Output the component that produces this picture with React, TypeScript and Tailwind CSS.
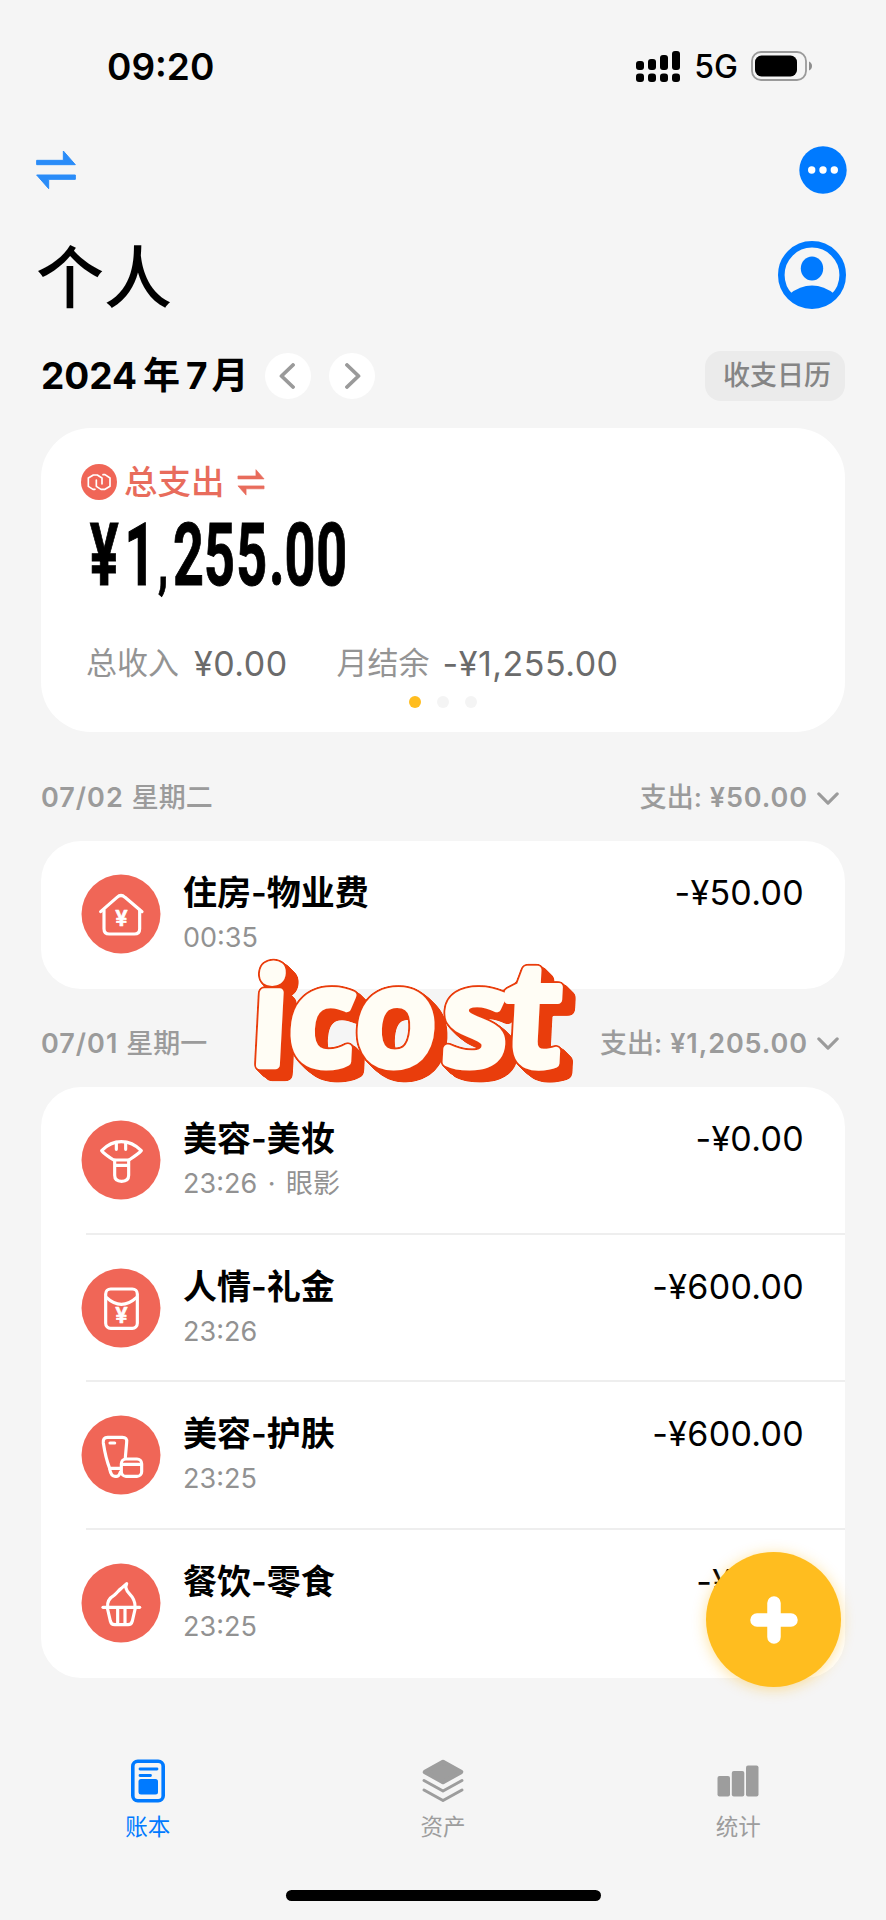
import type { ReactNode } from 'react';

type IconProps = { className?: string };

/* Category icons share a 240 x 240 box with a full-bleed red disc */
function CategoryIcon({ children }: { children: ReactNode }) {
    return (
        <svg
            viewBox="0 0 240 240"
            className="w-20 h-20 shrink-0"
            fill="none"
            stroke="#fff"
            strokeWidth="9.5"
            strokeLinecap="round"
            strokeLinejoin="round"
        >
            <circle cx="120" cy="120" r="118.5" fill="#f06657" stroke="none" />
            {children}
        </svg>
    );
}

function Yen({ y }: { y: number }) {
    return (
        <text x="121" y={y} textAnchor="middle" fill="#fff" stroke="#fff" strokeWidth="2" className="font-['Inter'] font-semibold text-[66px]">
            ¥
        </text>
    );
}

function HouseIcon() {
    return (
        <CategoryIcon>
            <path d="M59 113 L108 70 Q120 59 132 70 L183 113" />
            <path d="M69 108 V164 Q69 180 85 180 H160 Q176 180 176 164 V108" />
            <Yen y={155} />
        </CategoryIcon>
    );
}

function BrushIcon() {
    return (
        <CategoryIcon>
            <path d="M98 120 Q70 102 62 92 Q88 65 121 65 Q154 65 181 92 Q172 102 144 120 Z" />
            <path d="M106 67 V88 M134 67 V88" />
            <path d="M101 120 V166 Q101 184 122 184 Q143 184 143 166 V120 M101 136 H143" />
        </CategoryIcon>
    );
}

function PacketIcon() {
    return (
        <CategoryIcon>
            <rect x="74" y="63" width="95" height="118" rx="15" />
            <path d="M76 88 Q121 130 167 88" />
            <Yen y={166} />
        </CategoryIcon>
    );
}

function SkinCareIcon() {
    return (
        <CategoryIcon>
            <path d="M118 160 H86 Q74 130 67 84 Q65 67 80 67 H124 Q139 67 137 82 L133 128" />
            <path d="M86 162 Q90 184 102 184 H108 Q114 184 118 172" />
            <path d="M87 84 H101" />
            <rect x="121" y="132" width="61" height="52" rx="14" />
            <path d="M123 148 H180" />
        </CategoryIcon>
    );
}

function CupcakeIcon() {
    return (
        <CategoryIcon>
            <path d="M66 133 H176" />
            <path d="M79 135 L88 174 Q91 185 101 185 H141 Q151 185 154 174 L163 135" />
            <path d="M110 135 V184 M132 135 V184" />
            <path d="M80 131 C78 112 87 104 99 97 C108 91 111 83 121 76 Q128 70 137 62 Q132 71 137 80 C139 93 163 98 162 131" />
        </CategoryIcon>
    );
}

function SwapIcon({ className }: IconProps) {
    return (
        <svg viewBox="0 0 120 120" className={className} fill="currentColor" stroke="currentColor" strokeWidth="3" strokeLinejoin="round">
            <path d="M2 31 H82 V3 L118 44 H2 Z" />
            <path d="M118 88 H38 V116 L2 75 H118 Z" />
        </svg>
    );
}

function SignalIcon() {
    return (
        <svg viewBox="0 0 45 31" className="w-[45px] h-[31px]">
            <rect x="0" y="10" width="8" height="9" rx="3" />
            <rect x="12" y="8" width="8" height="11" rx="3" />
            <rect x="24" y="4" width="8" height="15" rx="3" />
            <rect x="36" y="0" width="8" height="19" rx="3" />
            <rect x="0" y="22.5" width="8" height="8.5" rx="3" />
            <rect x="12" y="22.5" width="8" height="8.5" rx="3" />
            <rect x="24" y="22.5" width="8" height="8.5" rx="3" />
            <rect x="36" y="22.5" width="8" height="8.5" rx="3" />
        </svg>
    );
}

function BatteryIcon() {
    return (
        <svg viewBox="0 0 62 30" className="w-[62px] h-[30px]">
            <rect x="1" y="1" width="54" height="28" rx="9" fill="none" stroke="#9a9a9a" strokeWidth="1.8" />
            <rect x="4" y="4.5" width="42" height="21" rx="6.5" />
            <path d="M58 10.5 Q61 12 61 15 Q61 18 58 19.5 Z" fill="#8e8e8e" />
        </svg>
    );
}

function MoreIcon() {
    return (
        <svg viewBox="0 0 48 48" className="w-12 h-12">
            <circle cx="24" cy="24" r="23.7" fill="#007aff" />
            <circle cx="12.7" cy="24" r="3.7" fill="#fff" />
            <circle cx="24" cy="24" r="3.7" fill="#fff" />
            <circle cx="35.3" cy="24" r="3.7" fill="#fff" />
        </svg>
    );
}

function AvatarIcon() {
    return (
        <svg viewBox="0 0 68 68" className="w-[68px] h-[68px]">
            <circle cx="34" cy="34" r="30.7" fill="none" stroke="#007aff" strokeWidth="6.6" />
            <ellipse cx="34" cy="27.5" rx="11.2" ry="12" fill="#007aff" />
            <path d="M11 53.5 Q22 44.6 34 44.6 Q46 44.6 57 53.5 Q47 65 34 65 Q21 65 11 53.5 Z" fill="#007aff" />
        </svg>
    );
}

function CoinBadge() {
    return (
        <svg viewBox="0 0 108 108" className="w-9 h-9" fill="none" stroke="#fff" strokeWidth="5" strokeLinecap="round" strokeLinejoin="round">
            <circle cx="54" cy="54" r="54" fill="#f06657" stroke="none" />
            <path d="M42 76 L36 76 L22 67 V42 L37 33 H49 L63 42 V60" />
            <path d="M66 32 L72 32 L87 42 V67 L72 76 H60 L46 67 V48" />
        </svg>
    );
}

function Chevron({ direction }: { direction: 'left' | 'right' }) {
    return (
        <svg viewBox="0 0 16 26" className="w-4 h-[26px]" fill="none" stroke="#9a9a9a" strokeWidth="3.8" strokeLinecap="round" strokeLinejoin="round">
            <path d={direction === 'left' ? 'M14 2 L2.5 13 L14 24' : 'M2 2 L13.5 13 L2 24'} />
        </svg>
    );
}

function LedgerIcon({ className }: IconProps) {
    return (
        <svg viewBox="0 0 44 44" className={className} fill="none" stroke="currentColor">
            <rect x="6.8" y="2.3" width="30.4" height="39.4" rx="5" strokeWidth="3.6" />
            <path d="M14 10 H31 M14 16.5 H24.5" strokeWidth="2.8" strokeLinecap="round" />
            <rect x="12.5" y="20" width="19.5" height="15.5" rx="2.5" fill="currentColor" stroke="none" />
        </svg>
    );
}

function LayersIcon({ className }: IconProps) {
    return (
        <svg viewBox="0 0 44 44" className={className} fill="none" stroke="currentColor" strokeLinecap="round" strokeLinejoin="round">
            <path d="M22 3 L40 13 L22 23 L4 13 Z" fill="currentColor" strokeWidth="4.5" />
            <path d="M3 21.5 L22 32 L41 21.5 M3 31 L22 41.5 L41 31" strokeWidth="3" />
        </svg>
    );
}

function BarsIcon({ className }: IconProps) {
    return (
        <svg viewBox="0 0 44 44" className={className} fill="currentColor">
            <rect x="1.5" y="17" width="12.5" height="20.5" rx="2" />
            <rect x="15.8" y="12" width="12.5" height="25.5" rx="2" />
            <rect x="30" y="6.5" width="12.5" height="31" rx="2" />
        </svg>
    );
}

function Sticker() {
    return (
        <svg viewBox="230 890 380 240" className="absolute left-[230px] top-[890px] w-[380px] h-60 overflow-visible pointer-events-none">
            <defs>
                {/* Grow the letters into an outline, then sweep it diagonally for the 3D edge */}
                <filter id="extrude" filterUnits="userSpaceOnUse" x="230" y="890" width="400" height="240" colorInterpolationFilters="sRGB">
                    <feGaussianBlur in="SourceAlpha" stdDeviation="1.7" />
                    <feComponentTransfer result="s0">
                        <feFuncA type="linear" slope="10" intercept="-0.6" />
                    </feComponentTransfer>
                    <feOffset in="s0" dx="1" dy="1" result="o1" />
                    <feComposite in="s0" in2="o1" operator="over" result="s1" />
                    <feOffset in="s1" dx="2" dy="2" result="o2" />
                    <feComposite in="s1" in2="o2" operator="over" result="s2" />
                    <feOffset in="s2" dx="4" dy="4" result="o3" />
                    <feComposite in="s2" in2="o3" operator="over" result="s3" />
                    <feOffset in="s3" dx="4" dy="3" result="o4" />
                    <feComposite in="s3" in2="o4" operator="over" result="s4" />
                    <feFlood floodColor="#e93d0c" />
                    <feComposite in2="s4" operator="in" result="edge" />
                    <feMerge>
                        <feMergeNode in="edge" />
                        <feMergeNode in="SourceGraphic" />
                    </feMerge>
                </filter>
            </defs>
            <g filter="url(#extrude)">
                <text
                    transform="translate(55 0) skewX(-3)"
                    x="250 287 354 441"
                    y="1065"
                    fill="#fffdf5"
                    stroke="#fffdf5"
                    strokeWidth="8.5"
                    strokeLinejoin="round"
                    className="font-['Open_Sans'] font-semibold text-[134px]"
                >
                    icos
                    <tspan x="503" className="text-[144px]">t</tspan>
                </text>
            </g>
        </svg>
    );
}

type Entry = {
    icon: () => ReactNode;
    title: string;
    note: string;
    amount: string;
};

const tuesday: Entry[] = [
    { icon: HouseIcon, title: '住房-物业费', note: '00:35', amount: '-¥50.00' },
];

const monday: Entry[] = [
    { icon: BrushIcon, title: '美容-美妆', note: '23:26 · 眼影', amount: '-¥0.00' },
    { icon: PacketIcon, title: '人情-礼金', note: '23:26', amount: '-¥600.00' },
    { icon: SkinCareIcon, title: '美容-护肤', note: '23:25', amount: '-¥600.00' },
    { icon: CupcakeIcon, title: '餐饮-零食', note: '23:25', amount: '-¥5.00' },
];

const tabs = [
    { icon: LedgerIcon, label: '账本', color: 'text-[#007aff]' },
    { icon: LayersIcon, label: '资产', color: 'text-[#9d9d9d]' },
    { icon: BarsIcon, label: '统计', color: 'text-[#9d9d9d]' },
];

function DayHeader({ date, weekday, total }: { date: string; weekday: string; total: string }) {
    return (
        <div className="flex items-center justify-between h-[88px] pt-0.5 pr-[6px] text-[27px] font-semibold text-[#9b9b9b]">
            <div className="flex items-center gap-2">
                <span className="tracking-[1px]">{date}</span>
                <span className="font-medium">{weekday}</span>
            </div>
            <div className="flex items-center">
                <span className="font-medium">支出:</span>
                <span className="ml-2 tracking-[0.9px]">{total}</span>
                <svg viewBox="0 0 24 14" className="w-[22px] h-[13px] ml-[9px]" fill="none" stroke="currentColor" strokeWidth="3.4" strokeLinecap="round" strokeLinejoin="round">
                    <path d="M2 2 L12 12 L22 2" />
                </svg>
            </div>
        </div>
    );
}

function EntryList({ entries }: { entries: Entry[] }) {
    return (
        <div className="bg-white rounded-[40px] overflow-hidden">
            {entries.map((entry, i) => (
                <div
                    key={i}
                    className="flex items-start h-[147.75px] ml-[45px] pr-[41px] border-b-2 border-[#eeeeee] last:border-transparent"
                >
                    <div className="-ml-[5px] pt-[33px]">
                        <entry.icon />
                    </div>
                    <div className="flex-1 pt-8 pl-[22px]">
                        <h3 className="text-[34px] leading-10 font-semibold text-black">{entry.title}</h3>
                        <p className="mt-[7px] text-[27px] leading-9 [word-spacing:3px] text-[#929292]">{entry.note}</p>
                    </div>
                    <span className="pt-8 text-[34px] leading-10 tracking-[0.3px] text-black">{entry.amount}</span>
                </div>
            ))}
        </div>
    );
}

export default function App() {
    return (
        <div className="relative flex flex-col w-[886px] h-[1920px] bg-[#f5f5f5] overflow-hidden font-['Inter','Noto_Sans_CJK_SC',sans-serif]">
            {/* Status bar */}
            <div className="flex items-center justify-between h-[132px] pl-[107px] pr-[73px]">
                <span className="text-[37px] font-semibold leading-none">09:20</span>
                <div className="flex items-center gap-[13px]">
                    <SignalIcon />
                    <span className="pt-0.5 text-[32px] font-medium leading-none">5G</span>
                    <BatteryIcon />
                </div>
            </div>

            {/* Toolbar */}
            <div className="flex items-center justify-between h-[76px] pl-9 pr-[39px]">
                <SwapIcon className="w-10 h-10 text-[#2a8cf8]" />
                <MoreIcon />
            </div>

            <div className="flex items-center justify-between h-[134px] pl-9 pr-10">
                <h1 className="pt-[5px] text-[68px] leading-none font-medium">个人</h1>
                <AvatarIcon />
            </div>

            {/* Month switcher */}
            <div className="flex items-center justify-between h-[86px] pl-[41px] pr-[41px] -mt-[9px]">
                <div className="flex items-center">
                    <div className="flex items-center w-[224px] text-[37px] font-bold">
                        <span>2024</span>
                        <span className="ml-1.5">年</span>
                        <span className="ml-1.5">7</span>
                        <span className="ml-1">月</span>
                    </div>
                    <div className="flex gap-[18px]">
                        <button className="flex items-center justify-center w-[46px] h-[46px] pr-0.5 rounded-full bg-white">
                            <Chevron direction="left" />
                        </button>
                        <button className="flex items-center justify-center w-[46px] h-[46px] pl-0.5 rounded-full bg-white">
                            <Chevron direction="right" />
                        </button>
                    </div>
                </div>
                <button className="w-[140px] h-[50px] pl-1 rounded-2xl bg-[#ebebeb] text-[27px] font-medium text-[#858585]">收支日历</button>
            </div>

            <main className="px-[41px] pt-[9px]">
                {/* Summary */}
                <section className="flex flex-col h-[304px] px-10 pt-9 bg-white rounded-[50px]">
                    <div className="flex items-center h-9 text-[#e86c5c]">
                        <CoinBadge />
                        <span className="ml-[7px] text-[33.5px] font-medium">总支出</span>
                        <SwapIcon className="w-7 h-[27px] ml-3" />
                    </div>
                    <svg viewBox="0 0 270 110" className="w-[270px] h-[110px] -mt-1 ml-[7px] shrink-0 overflow-visible">
                        <text
                            transform="scale(0.62 1)"
                            x="3 59"
                            y="89"
                            className="font-['Roboto'] font-bold text-[87px]"
                            stroke="#000"
                            strokeWidth="1"
                        >
                            ¥1<tspan x="113" className="text-[66px]">,</tspan><tspan x="137 187 239 292 317 368">255.00</tspan>
                        </text>
                    </svg>
                    <div className="flex items-center h-10 mt-[37px] pl-[5px] text-[34px]">
                        <span className="text-[31px] text-[#949494]">总收入</span>
                        <span className="ml-[15px] tracking-[0.5px] text-[#6b6b6b]">¥0.00</span>
                        <span className="ml-[49px] text-[31px] text-[#949494]">月结余</span>
                        <span className="ml-[13px] tracking-[0.5px] text-[#6b6b6b]">-¥1,255.00</span>
                    </div>
                    <div className="flex justify-center gap-4 mt-[13px]">
                        <span className="w-3 h-3 rounded-full bg-[#ffbd1f]" />
                        <span className="w-3 h-3 rounded-full bg-[#f4f4f4]" />
                        <span className="w-3 h-3 rounded-full bg-[#f4f4f4]" />
                    </div>
                </section>

                <div className="pt-[21px]">
                    <DayHeader date="07/02" weekday="星期二" total="¥50.00" />
                    <EntryList entries={tuesday} />
                </div>
                <div className="pt-[10px]">
                    <DayHeader date="07/01" weekday="星期一" total="¥1,205.00" />
                    <EntryList entries={monday} />
                </div>
            </main>

            {/* Tab bar */}
            <nav className="flex mt-[81px]">
                {tabs.map((tab) => (
                    <div key={tab.label} className={`flex flex-col items-center flex-1 ${tab.color}`}>
                        <tab.icon className="w-11 h-11" />
                        <span className="mt-2 text-[22.5px] leading-8">{tab.label}</span>
                    </div>
                ))}
            </nav>
            <div className="w-[315px] h-[11px] mx-auto mt-[47px] rounded-full bg-black" />

            <Sticker />

            {/* Add entry */}
            <button className="absolute left-[706px] top-[1552px] flex items-center justify-center w-[135px] h-[135px] rounded-full bg-[#ffbd1f] shadow-[0_2px_14px_rgba(255,189,31,0.45)]">
                <svg viewBox="0 0 48 48" className="w-12 h-12" stroke="#fff" strokeWidth="13.5" strokeLinecap="round">
                    <path d="M24 7 V41 M7 24 H41" />
                </svg>
            </button>
        </div>
    );
}
